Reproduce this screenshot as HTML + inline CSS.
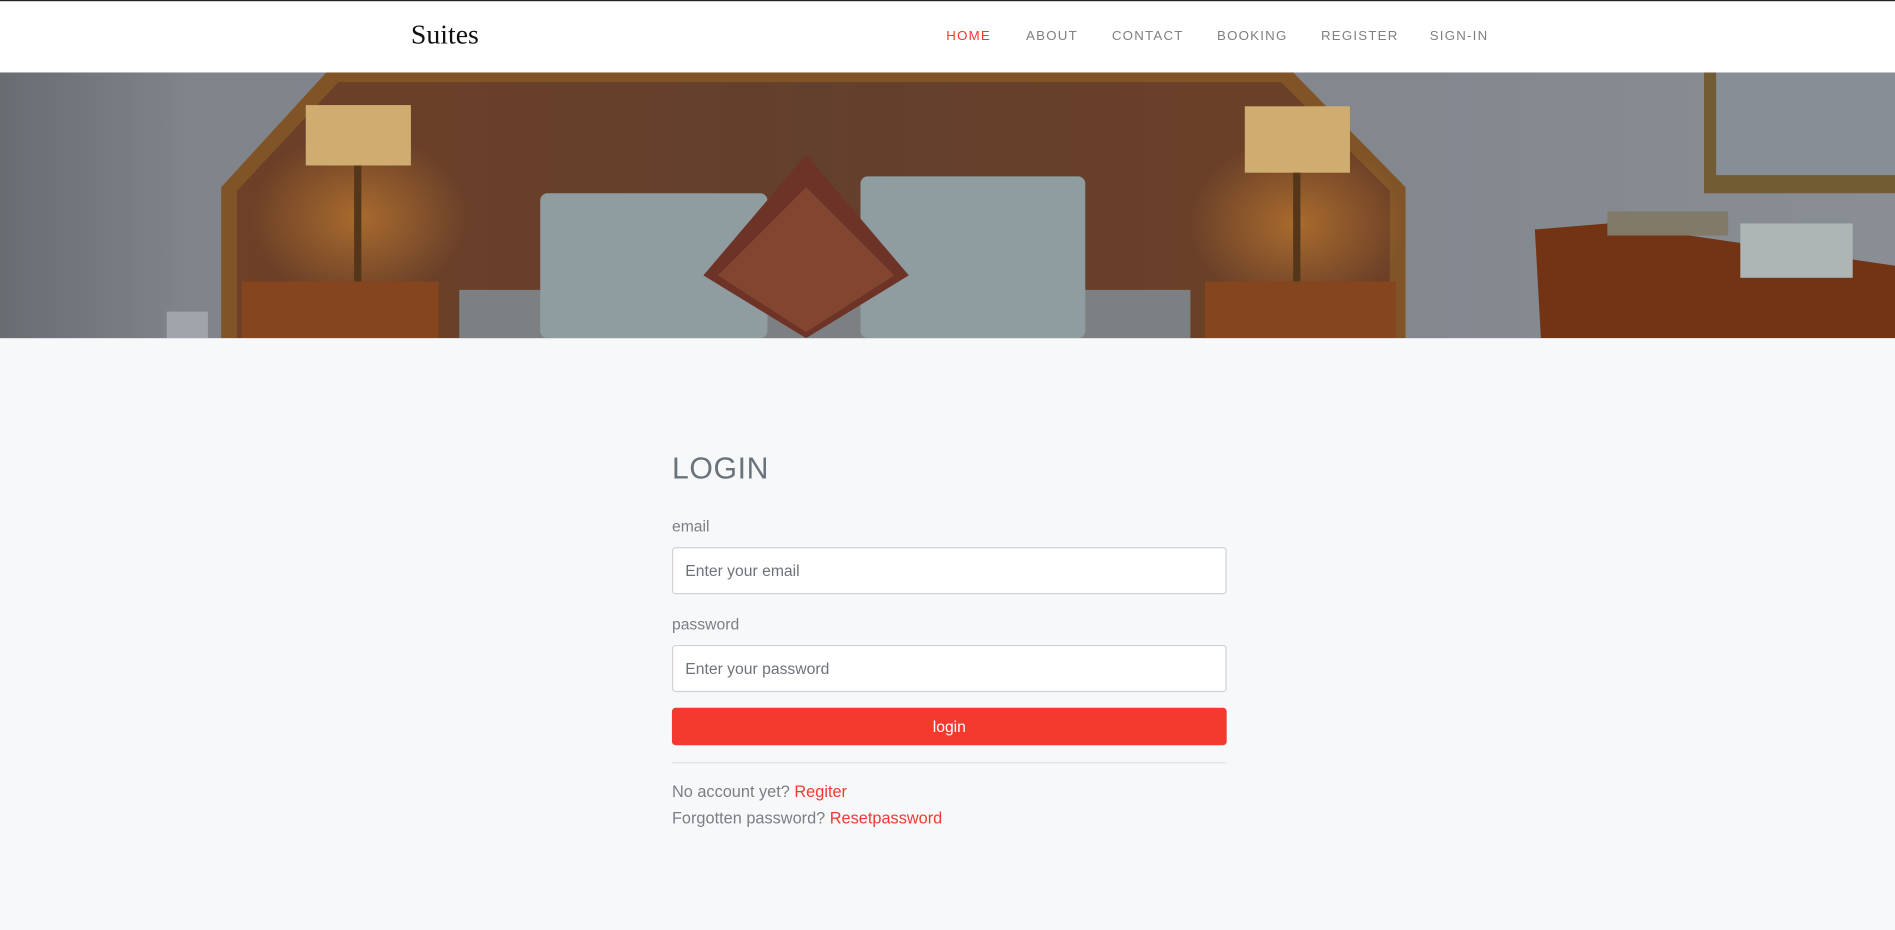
<!DOCTYPE html>
<html><head><meta charset="utf-8"><style>
html,body{margin:0;padding:0;width:1895px;height:930px;overflow:hidden;background:#f7f8fa}
#w{position:absolute;left:0;top:0;width:1568px;height:770px;transform:scale(1.20855,1.2078);transform-origin:0 0;font-family:"Liberation Sans",sans-serif;background:#f7f8fa}
.a{position:absolute}
nav{position:absolute;left:0;top:0;width:1568px;height:60px;background:#fff;border-top:1px solid #222;box-sizing:border-box}
.logo{position:absolute;left:340px;top:15px;font-family:"Liberation Serif",serif;font-size:23px;color:#111}
.ni{position:absolute;top:23px;font-size:11px;letter-spacing:1px;color:#808080}
#hero{position:absolute;left:0;top:60px;width:1568px;height:220px;overflow:hidden;background:linear-gradient(90deg,#70747a 0%,#888d94 10%,#8c9198 75%,#92979e 100%)}
label{position:absolute;left:556px;font-size:13px;color:#7a7f85}
.in{position:absolute;left:556px;width:457px;height:37px;background:#fff;border:1px solid #cfd3d7;border-radius:3px;font-size:13px;color:#6c737a;line-height:37px;text-indent:10px}
.lk{position:absolute;left:556px;font-size:13.5px;color:#7a7f85}
</style></head><body><div id="w">
<nav>
<div class="logo">Suites</div>
<div class="ni" style="left:783px;color:#f4392f">HOME</div>
<div class="ni" style="left:849px">ABOUT</div>
<div class="ni" style="left:920px">CONTACT</div>
<div class="ni" style="left:1007px">BOOKING</div>
<div class="ni" style="left:1093px">REGISTER</div>
<div class="ni" style="left:1183px">SIGN-IN</div>
</nav>
<div id="hero">
<svg width="1568" height="220" style="position:absolute;left:0;top:0">
<defs><linearGradient id="wd" x1="0" x2="1"><stop offset="0" stop-color="#74452a"/><stop offset=".5" stop-color="#6a4430"/><stop offset="1" stop-color="#74452a"/></linearGradient>
<radialGradient id="gl"><stop offset="0" stop-color="#c07a32" stop-opacity=".85"/><stop offset="1" stop-color="#c07a32" stop-opacity="0"/></radialGradient></defs>
<polygon points="270,0 1070,0 1163,95 1163,220 183,220 183,95" fill="#8a5a2a"/>
<polygon points="280,8 1060,8 1150,98 1150,220 196,220 196,98" fill="url(#wd)"/>
<ellipse cx="297" cy="120" rx="90" ry="70" fill="url(#gl)"/>
<ellipse cx="1073" cy="125" rx="90" ry="70" fill="url(#gl)"/>
<rect x="1410" y="0" width="158" height="100" fill="#7a6238"/>
<rect x="1420" y="0" width="148" height="85" fill="#9097a0"/>
<rect x="380" y="180" width="605" height="40" fill="#85888c"/>
<rect x="447" y="100" width="188" height="120" fill="#98a6ab" rx="6"/>
<rect x="712" y="86" width="186" height="134" fill="#98a6ab" rx="6"/>
<polygon points="667,68 752,168 667,220 582,168" fill="#74372a"/>
<polygon points="667,95 740,168 667,215 594,168" fill="#8a4a34"/>
<rect x="253" y="27" width="87" height="50" fill="#dcb878"/>
<rect x="293" y="77" width="6" height="100" fill="#5a3a1c"/>
<rect x="1030" y="28" width="87" height="55" fill="#dcb878"/>
<rect x="1070" y="83" width="6" height="100" fill="#5a3a1c"/>
<rect x="200" y="173" width="163" height="47" fill="#8e4a20"/>
<rect x="997" y="173" width="158" height="47" fill="#8e4a20"/>
<polygon points="1270,130 1330,125 1568,160 1568,220 1275,220" fill="#7a3816"/>
<rect x="1440" y="125" width="93" height="45" fill="#b8c2c0"/>
<rect x="1330" y="115" width="100" height="20" fill="#8a8270"/>
<rect x="138" y="198" width="34" height="22" fill="#aab0b6"/>
</svg>
<div class="a" style="left:0;top:0;width:1568px;height:220px;background:rgba(0,0,0,.06)"></div>
</div>
<div class="a" style="left:556px;top:374px;font-size:25px;color:#6a737c;letter-spacing:.5px">LOGIN</div>
<label style="top:428px">email</label>
<div class="in" style="top:453px">Enter your email</div>
<label style="top:509px">password</label>
<div class="in" style="top:534px">Enter your password</div>
<div class="a" style="left:556px;top:586px;width:459px;height:31px;background:#f4392f;border-radius:3px;color:#fff;font-size:13px;text-align:center;line-height:31px">login</div>
<div class="a" style="left:556px;top:631px;width:459px;height:1px;background:#dfe2e5"></div>
<div class="lk" style="top:648px">No account yet? <span style="color:#f4392f">Regiter</span></div>
<div class="lk" style="top:670px">Forgotten password? <span style="color:#f4392f">Resetpassword</span></div>
</div></body></html>
